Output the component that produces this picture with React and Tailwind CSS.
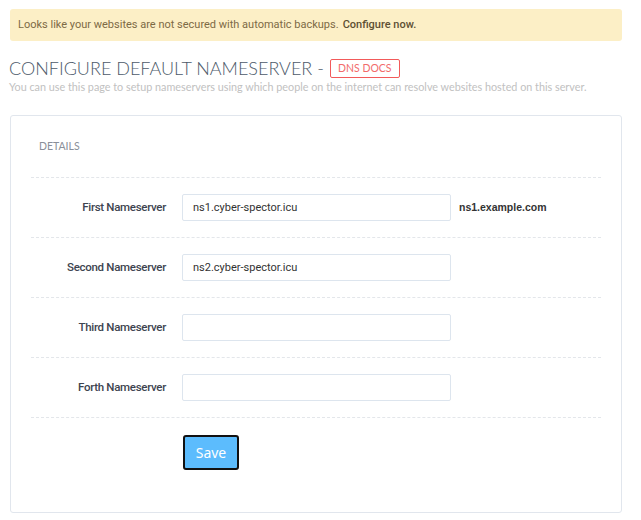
const rows = [
  { label: "First Nameserver", value: "ns1.cyber-spector.icu", hint: "ns1.example.com" },
  { label: "Second Nameserver", value: "ns2.cyber-spector.icu" },
  { label: "Third Nameserver", value: "" },
  { label: "Forth Nameserver", value: "" },
];

const App = () => {
  return (
    <div className="w-[641px] h-[520px] bg-white pt-[9px] px-[10px] font-['Roboto',sans-serif]">
      {/* Backup notice */}
      <div className="w-[612px] h-[32px] bg-[#fcefc6] rounded-[3px] flex items-center pl-[8px] text-[11px] text-[#7d6a45]">
        <span>Looks like your websites are not secured with automatic backups.</span>
        <span className="font-medium ml-[4px] text-[#5e4f33]">Configure now.</span>
      </div>

      {/* Title */}
      <div className="mt-[18px] ml-[-1px] flex items-center">
        <h1 className="text-[18px] font-light text-[#4d5a6a] leading-[19px] font-['Lato',sans-serif]">
          CONFIGURE DEFAULT NAMESERVER -
        </h1>
        <span className="ml-[6px] h-[19px] w-[70px] justify-center flex items-center border border-[#f25a5a] rounded-[2px] text-[10.5px] text-[#f26b6b] font-['Lato',sans-serif]">
          DNS DOCS
        </span>
      </div>
      <p className="mt-[1px] ml-[-1px] text-[10.8px] leading-[15px] text-[#c1c1c1] font-['Lato',sans-serif]">
        You can use this page to setup nameservers using which people on the internet can resolve websites hosted on this server.
      </p>

      {/* Card */}
      <div className="mt-[21px] w-[612px] h-[398px] border border-[#e1e6ed] rounded-[3px] px-[20px]">
        <div className="pt-[23px] pl-[8px] text-[10.5px] text-[#8a8f99] h-[61px] font-['Lato',sans-serif]">DETAILS</div>
        {rows.map((r) => (
          <div key={r.label} className="border-t border-dashed border-[#e3e6ea] h-[60px] flex items-center">
            <div className="w-[135px] text-right text-[11.5px] font-medium text-[#3d4450] tracking-[-0.3px]">
              {r.label}
            </div>
            <input
              readOnly
              value={r.value}
              className="ml-[16px] w-[269px] h-[27px] border border-[#dde5ee] rounded-[2px] px-[10px] text-[11px] text-[#333] outline-none"
            />
            {r.hint && (
              <span className="ml-[8px] text-[10.5px] font-bold text-[#333] font-['Liberation_Sans',sans-serif]">
                {r.hint}
              </span>
            )}
          </div>
        ))}
        <div className="border-t border-dashed border-[#e3e6ea] pt-[17px] pl-[152px]">
          <button className="w-[56px] h-[35px] bg-[#5cbcfd] border-2 border-[#111] rounded-[3px] text-white text-[14px] font-['Noto_Sans',sans-serif]">
            Save
          </button>
        </div>
      </div>
    </div>
  );
};

export default App;
